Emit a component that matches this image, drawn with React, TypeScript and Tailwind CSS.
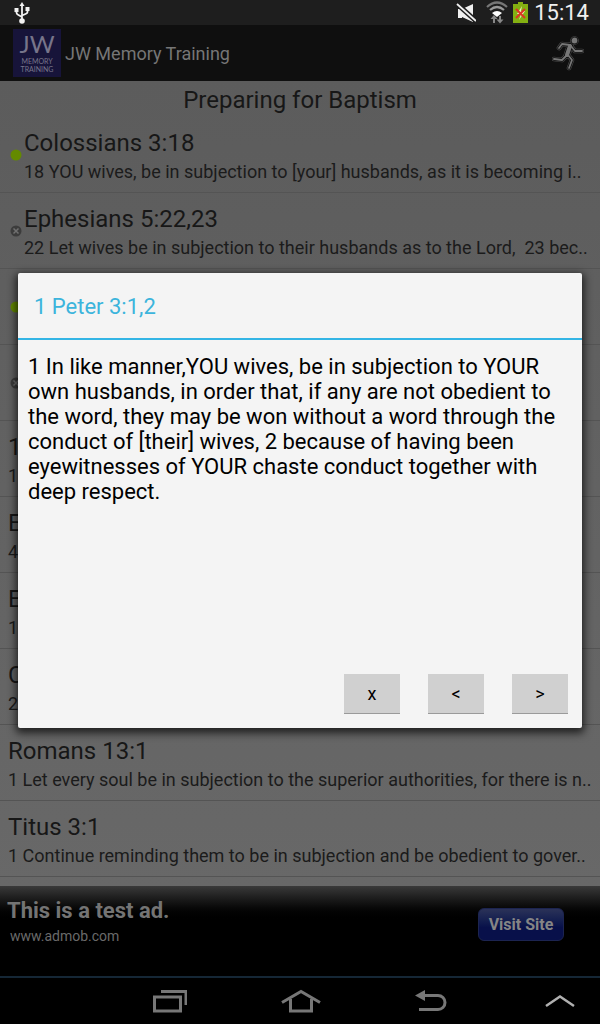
import type { ReactNode } from 'react';

interface Verse {
  title: string;
  text: string;
  status?: 'done' | 'open';
}

const verses: Verse[] = [
  { title: 'Colossians 3:18', text: '18 YOU wives, be in subjection to [your] husbands, as it is becoming i..', status: 'done' },
  { title: 'Ephesians 5:22,23', text: '22 Let wives be in subjection to their husbands as to the Lord,  23 bec..', status: 'open' },
  { title: '', text: '', status: 'done' },
  { title: '', text: '', status: 'open' },
  { title: '1', text: '1' },
  { title: 'E', text: '4' },
  { title: 'E', text: '1' },
  { title: 'C', text: '2' },
  { title: 'Romans 13:1', text: '1 Let every soul be in subjection to the superior authorities, for there is n..' },
  { title: 'Titus 3:1', text: '1 Continue reminding them to be in subjection and be obedient to gover..' },
];

function StatusBar() {
  return (
    <div className="flex h-[25px] shrink-0 items-center bg-[#1e1e1e] pl-[14px] pr-[11px]">
      <svg className="h-[22px] w-4" viewBox="0 0 16 22" fill="none" stroke="#f2f2f2" strokeWidth="1.8">
        <path d="M8 3v16M2.5 8v2.5q0 1.5 1.5 2.2L8 15M13.5 7v3q0 1-1.5 1.7L8 13.5" />
        <path d="M8 0l2.5 4h-5zM0.500 6h4v4h-4zM11.500 5h4v4h-4z" fill="#f2f2f2" stroke="none" />
        <circle cx="8" cy="19" r="2.8" fill="#f2f2f2" stroke="none" />
      </svg>
      <div className="ml-auto flex items-center">
        <svg className="h-5 w-5" viewBox="0 0 20 20">
          <path d="M2 6h4v9H2zM6 6l11-5v18L6 14z" fill="#efefef" />
          <path d="M0 0l20 18" stroke="#1e1e1e" strokeWidth="5" />
          <path d="M1 1l19 17" stroke="#efefef" strokeWidth="1.8" />
        </svg>
        <svg className="ml-[10px] h-[23px] w-[22px]" viewBox="0 0 22 23" fill="none" strokeWidth="2.2">
          <path d="M1 6Q11-3 21 6" stroke="#777" />
          <path d="M4 9Q11 3 18 9" stroke="#999" />
          <path d="M6 12q5-4 10 0l-5 4z" fill="#fff" />
          <path d="M8 22v-5M14 15v5" stroke="#888" strokeWidth="2" />
          <path d="M4.5 18L8 14l3.500 4zM10.500 18.500L14 22.500l3.500-4z" fill="#888" />
        </svg>
        <svg className="ml-[5px] h-[21px] w-[15px]" viewBox="0 0 15 21">
          <path d="M5 0h5v2h5v19H0V2h5z" fill="#84b012" />
          <path d="M9 4l-5 8h4l-2 6 6-9H8z" fill="#f1edc0" />
          <path d="M3 7l9 9M12 7l-9 9" stroke="#dd3524" strokeWidth="2" />
        </svg>
        <span className="ml-[6px] text-[22px] leading-[25px] text-[#f0f0f0]">15:14</span>
      </div>
    </div>
  );
}

const runnerLimbs = 'M18 10L15 20M18 10L10 9L7 13M19 11L23 16L30 16M15 20L10 25L2 24M16 20L20 25L17 33';

function RunnerIcon() {
  return (
    <svg className="h-9 w-8" viewBox="0 0 32 36" fill="none" strokeLinecap="round" strokeLinejoin="round">
      <g stroke="#4a4a4a" strokeWidth="4.6">
        <path d={runnerLimbs} />
        <path d="M18 11L15 20" strokeWidth="7" />
        <circle cx="22.5" cy="5.5" r="2" />
      </g>
      <g stroke="#101010" strokeWidth="3.4">
        <path d={runnerLimbs} />
        <path d="M18 11L15 20" strokeWidth="5.800" />
        <circle cx="22.5" cy="5.5" r="2" />
      </g>
      <g stroke="#777" strokeWidth="1.8">
        <path d={runnerLimbs} />
        <path d="M18 11L15 20" strokeWidth="4" />
        <circle cx="22.5" cy="5.5" r="2" fill="#777" />
      </g>
    </svg>
  );
}

function AppBar() {
  return (
    <header className="flex h-14 shrink-0 items-center bg-[#0f0f0f] pl-[13px] pr-4">
      <div className="flex h-12 w-12 flex-col items-center bg-[#17143a] pt-[2px] font-[Lato,sans-serif] text-[#77758a]">
        <span className="text-[24px] leading-[26px]">JW</span>
        <span className="text-[7px] leading-[8px]">MEMORY</span>
        <span className="text-[7px] leading-[8px]">TRAINING</span>
      </div>
      <h1 className="ml-1 pt-[2px] text-[18px] leading-6 text-[#767676]">JW Memory Training</h1>
      <button type="button" aria-label="Start training" className="ml-auto">
        <RunnerIcon />
      </button>
    </header>
  );
}

function StatusDot({ status }: { status: 'done' | 'open' }) {
  return (
    <svg className="h-3 w-3 shrink-0" viewBox="0 0 12 12">
      {status === 'done' ? (
        <circle cx="6" cy="6" r="5.5" fill="#648a00" />
      ) : (
        <>
          <circle cx="6" cy="6" r="5.5" fill="#3c3c3c" />
          <path d="M3.5 3.5l5 5M8.5 3.5l-5 5" stroke="#707070" strokeWidth="1.5" />
        </>
      )}
    </svg>
  );
}

function VerseRow({ verse }: { verse: Verse }) {
  return (
    <li className={`flex h-[76px] items-center border-b border-[#545454] ${verse.status ? 'pl-[10px]' : 'pl-2'}`}>
      {verse.status && <StatusDot status={verse.status} />}
      <div className={`min-w-0 flex-1 ${verse.status ? 'ml-[2px]' : ''}`}>
        <h3 className="h-8 text-[24px] leading-8 text-[#171717]">{verse.title}</h3>
        <p className="h-6 whitespace-pre text-[18px] leading-[26px] text-[#1b1b1b]">{verse.text}</p>
      </div>
    </li>
  );
}

function DialogButton({ label, children }: { label: string; children: ReactNode }) {
  return (
    <button
      type="button"
      aria-label={label}
      className="h-10 w-14 border-b border-[#9a9a9a] bg-[#d0d0d0] text-[18px] leading-6 text-black"
    >
      {children}
    </button>
  );
}

function VerseDialog() {
  return (
    <section
      role="dialog"
      aria-labelledby="verse-title"
      className="w-full rounded-xs bg-[#f4f4f4] shadow-[0_3px_8px_2px_rgba(0,0,0,0.7)]"
    >
      <h2 id="verse-title" className="border-b-2 border-[#33b5e5] px-4 pb-4 pt-[18px] text-[22px] leading-[31px] text-[#3cb4dc]">
        1 Peter 3:1,2
      </h2>
      <div className="flex min-h-[388px] flex-col px-[10px] pb-[14px] pt-[14px]">
        <p className="text-[22px] leading-[25px] text-black">
          1 In like manner,YOU wives, be in subjection to YOUR own husbands, in order that, if any are not obedient to
          the word, they may be won without a word through the conduct of [their] wives, 2 because of having been
          eyewitnesses of YOUR chaste conduct together with deep respect.
        </p>
        <div className="mt-auto flex justify-end gap-7 pr-1">
          <DialogButton label="Close">x</DialogButton>
          <DialogButton label="Previous">&lt;</DialogButton>
          <DialogButton label="Next">&gt;</DialogButton>
        </div>
      </div>
    </section>
  );
}

function AdBanner() {
  return (
    <aside className="flex h-[90px] shrink-0 items-start bg-linear-to-b from-[#3a3a3a] to-black to-40% pl-[7px] pr-9">
      <div className="pt-[13px]">
        <p className="text-[22px] font-bold leading-6 text-[#747474]">This is a test ad.</p>
        <a href="#ad" className="ml-[3px] block text-[14px] leading-[26px] text-[#6a6a6a]">
          www.admob.com
        </a>
      </div>
      <a
        href="#ad"
        className="ml-auto mt-[22px] flex h-[33px] w-[86px] items-center justify-center rounded-md border border-[#1c2450] bg-linear-to-b from-[#2b3258] to-[#08104a] to-60% text-[16px] font-bold text-[#858585]"
      >
        Visit Site
      </a>
    </aside>
  );
}

function NavBar() {
  return (
    <nav className="flex h-12 shrink-0 items-center gap-[94px] border-t-2 border-[#152736] bg-black pl-[151px] pr-6">
      <button type="button" aria-label="Recent apps">
        <svg className="h-6 w-9" viewBox="0 0 36 24" fill="none" stroke="#777" strokeWidth="3">
          <path d="M3.5 8h26v14h-26zM10 2.5h25V16" />
        </svg>
      </button>
      <button type="button" aria-label="Home">
        <svg className="h-6 w-10" viewBox="0 0 40 24" fill="none" stroke="#777" strokeWidth="3">
          <path d="M1 13.5L20 2.5l19 11M9.5 10v12h21V10" />
        </svg>
      </button>
      <button type="button" aria-label="Back">
        <svg className="h-6 w-8" viewBox="0 0 32 24" fill="none" stroke="#777" strokeWidth="3">
          <path d="M8 6.5h15a7 7 0 0 1 0 14H4" />
          <path d="M0 6.5L10 1v11z" fill="#777" stroke="none" />
        </svg>
      </button>
      <button type="button" aria-label="Show panel" className="ml-auto">
        <svg className="h-6 w-8" viewBox="0 0 32 24" fill="none" stroke="#b0b0b0" strokeWidth="2.5">
          <path d="M2 17l14-9.5L30 17" />
        </svg>
      </button>
    </nav>
  );
}

export default function App() {
  return (
    <div className="flex min-h-screen flex-col bg-black font-[Roboto,'Liberation_Sans',sans-serif]">
      <StatusBar />
      <div className="relative flex flex-1 flex-col">
        <AppBar />
        <main className="flex-1 bg-linear-to-b from-[#5c5c5c] to-[#686868]">
          <h2 className="h-9 text-center text-[24px] leading-[38px] text-[#171717]">Preparing for Baptism</h2>
          <ul className="pb-[9px]">
            {verses.map((verse, idx) => (
              <VerseRow key={idx} verse={verse} />
            ))}
          </ul>
        </main>
        <AdBanner />
        <div className="absolute inset-0 flex items-center justify-center px-[18px]">
          <VerseDialog />
        </div>
      </div>
      <NavBar />
    </div>
  );
}
